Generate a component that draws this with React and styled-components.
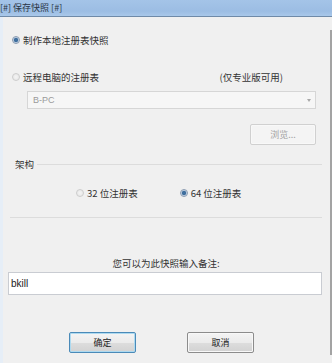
import React from "react";
import styled, { createGlobalStyle } from "styled-components";

const Global = createGlobalStyle`
  html, body { margin: 0; padding: 0; background: #f0f0f0; }
  body {
    font-family: "Noto Sans CJK SC", "Liberation Sans", sans-serif;
    font-size: 9.5px;
    color: #333;
  }
`;

const Window = styled.div`
  width: 332px;
  height: 363px;
  display: flex;
  flex-direction: column;
  background: #f0f0f0;
  overflow: hidden;
`;

const TitleBar = styled.div`
  height: 16px;
  line-height: 15px;
  font-size: 9px;
  color: #2a3646;
  background: linear-gradient(#a4c4e8, #9cbde3 70%, #a9c8ea);
  border-bottom: 1px solid #6f8aa8;
  white-space: pre;
`;

const Body = styled.div`
  flex: 1;
  display: flex;
  border-left: 3px solid #e6eef7;
`;

const Main = styled.div`
  flex: 1;
  display: flex;
  flex-direction: column;
  padding: 0 8px 0 7px;
`;

const Edge = styled.div`
  width: 2px;
  margin: 13px 0 8px;
  background: #a3a3a3;
`;

const RadioRow = styled.label`
  display: flex;
  align-items: center;
  height: 12px;
  margin-top: ${(p) => p.$top || 0}px;
  margin-left: ${(p) => (p.$left ?? 2)}px;
`;

const Dot = styled.span`
  width: 8px;
  height: 8px;
  border-radius: 50%;
  box-sizing: border-box;
  border: 1px solid ${(p) => (p.$on ? "#8a9bb0" : "#cdcdcd")};
  background: ${(p) =>
    p.$on
      ? "radial-gradient(circle, #3f6f9e 0 1.8px, #b9cbe0 2.5px, #eef3f8 4px)"
      : "radial-gradient(circle, #f4f4f4, #e4e4e4)"};
  margin-right: 3px;
  flex: none;
`;

const Note = styled.span`
  margin-left: auto;
  margin-right: 39px;
`;

const Combo = styled.div`
  margin: 8px 6px 0 17px;
  height: 18px;
  box-sizing: border-box;
  border: 1px solid #d6d6d6;
  background: #f6f6f6;
  display: flex;
  align-items: center;
  padding: 0 4px 0 5px;
  color: #9a9a9a;
  font-family: "Liberation Sans", sans-serif;
  font-size: 9px;
`;

const Arrow = styled.span`
  margin-left: auto;
  width: 0;
  height: 0;
  border-left: 2.5px solid transparent;
  border-right: 2.5px solid transparent;
  border-top: 3px solid #a8a8a8;
`;

const Button = styled.button`
  width: 67px;
  height: 21px;
  box-sizing: border-box;
  font-family: inherit;
  font-size: 9px;
  padding: 0;
  border-radius: 2px;
  border: 1px solid ${(p) => (p.$focus ? "#4a8ab8" : p.$disabled ? "#d0d0d0" : "#8c8c8c")};
  box-shadow: ${(p) => (p.$focus ? "inset 0 0 0 1px #aedaf0" : "inset 0 0 0 1px #f8f8f8")};
  background: ${(p) =>
    p.$disabled
      ? "#f4f4f4"
      : "linear-gradient(#f4f4f4, #ebebeb 50%, #dddddd 51%, #d2d2d2)"};
  color: ${(p) => (p.$disabled ? "#a3a3a3" : "#222")};
`;

const BrowseButton = styled(Button)`
  align-self: flex-end;
  margin: 15px 6px 0 0;
  width: 66px;
`;

const GroupHead = styled.div`
  display: flex;
  align-items: center;
  height: 12px;
  margin-top: 13px;
  padding-left: 5px;
`;

const Rule = styled.div`
  flex: 1;
  height: 1px;
  margin-left: 3px;
  background: #dcdcdc;
`;

const GroupBody = styled.div`
  height: 48px;
  box-sizing: border-box;
  padding: 17px 0 0 66px;
  border-bottom: 1px solid #dcdcdc;
  display: flex;
  gap: 42px;
`;

const Caption = styled.div`
  margin-top: 39px;
  text-align: center;
  line-height: 12px;
`;

const NoteInput = styled.div`
  margin: 3px 0 0 -2px;
  height: 23px;
  box-sizing: border-box;
  background: #fff;
  border: 1px solid #c9ccd2;
  display: flex;
  align-items: center;
  padding-left: 2px;
  font-family: "Liberation Sans", sans-serif;
  font-size: 10px;
  color: #1a1a1a;
`;

const ButtonRow = styled.div`
  display: flex;
  gap: 51px;
  margin-top: 37px;
  padding-left: 59px;
`;

export default function App() {
  return (
    <Window>
      <Global />
      <TitleBar>[#] 保存快照 [#]</TitleBar>
      <Body>
        <Main>
          <RadioRow $top={17}>
            <Dot $on />
            制作本地注册表快照
          </RadioRow>
          <RadioRow $top={25}>
            <Dot />
            远程电脑的注册表
            <Note>(仅专业版可用)</Note>
          </RadioRow>
          <Combo>
            B-PC
            <Arrow />
          </Combo>
          <BrowseButton $disabled>浏览...</BrowseButton>
          <GroupHead>
            架构
            <Rule />
          </GroupHead>
          <GroupBody>
            <RadioRow $left={0}>
              <Dot />
              32 位注册表
            </RadioRow>
            <RadioRow $left={0}>
              <Dot $on />
              64 位注册表
            </RadioRow>
          </GroupBody>
          <Caption>您可以为此快照输入备注:</Caption>
          <NoteInput>bkill</NoteInput>
          <ButtonRow>
            <Button $focus>确定</Button>
            <Button>取消</Button>
          </ButtonRow>
        </Main>
        <Edge />
      </Body>
    </Window>
  );
}
